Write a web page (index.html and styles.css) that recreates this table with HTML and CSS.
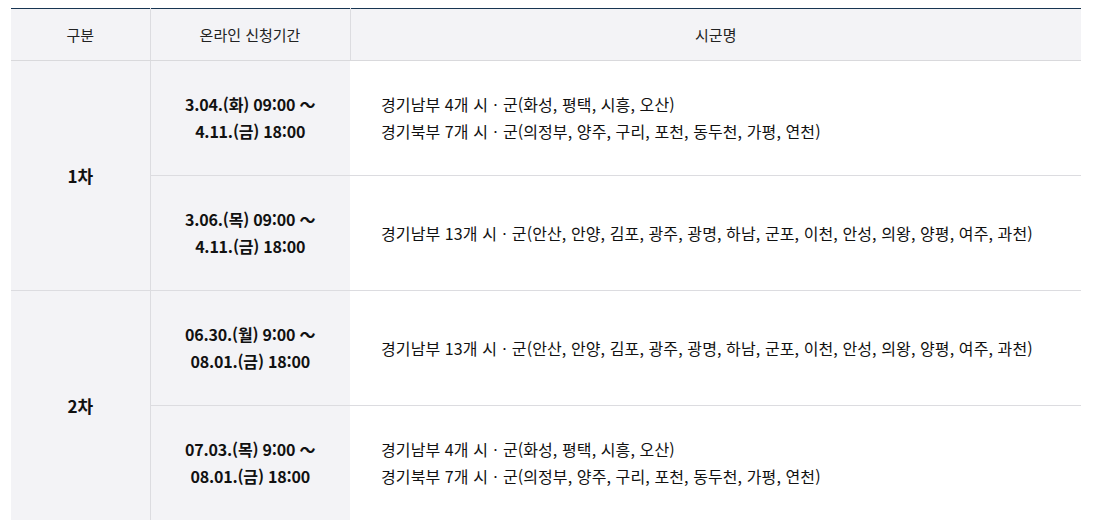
FILE: index.html
```html
<!DOCTYPE html>
<html lang="ko">
<head>
<meta charset="utf-8">
<link rel="stylesheet" href="styles.css">
</head>
<body>
<table class="tbl">
  <colgroup>
    <col class="c1"><col class="c2"><col class="c3">
  </colgroup>
  <thead>
    <tr>
      <th>구분</th>
      <th>온라인 신청기간</th>
      <th>시군명</th>
    </tr>
  </thead>
  <tbody>
    <tr>
      <td class="round" rowspan="2">1차</td>
      <td class="date">3.04.(화) 09:00 ～<br>4.11.(금) 18:00</td>
      <td class="area">경기남부 4개 시ㆍ군(화성, 평택, 시흥, 오산)<br>경기북부 7개 시ㆍ군(의정부, 양주, 구리, 포천, 동두천, 가평, 연천)</td>
    </tr>
    <tr>
      <td class="date">3.06.(목) 09:00 ～<br>4.11.(금) 18:00</td>
      <td class="area">경기남부 13개 시ㆍ군(안산, 안양, 김포, 광주, 광명, 하남, 군포, 이천, 안성, 의왕, 양평, 여주, 과천)</td>
    </tr>
    <tr>
      <td class="round" rowspan="2">2차</td>
      <td class="date">06.30.(월) 9:00 ～<br>08.01.(금) 18:00</td>
      <td class="area">경기남부 13개 시ㆍ군(안산, 안양, 김포, 광주, 광명, 하남, 군포, 이천, 안성, 의왕, 양평, 여주, 과천)</td>
    </tr>
    <tr>
      <td class="date">07.03.(목) 9:00 ～<br>08.01.(금) 18:00</td>
      <td class="area">경기남부 4개 시ㆍ군(화성, 평택, 시흥, 오산)<br>경기북부 7개 시ㆍ군(의정부, 양주, 구리, 포천, 동두천, 가평, 연천)</td>
    </tr>
  </tbody>
</table>
</body>
</html>
```

FILE: styles.css
```css
html, body {
  margin: 0;
  padding: 0;
  background: #ffffff;
}
body {
  padding: 8px 0 0 11px;
  font-family: "Noto Sans CJK KR", "Noto Sans", sans-serif;
  color: #111111;
}
.tbl {
  width: 1070px;
  border-collapse: collapse;
  table-layout: fixed;
  border-top: 1px solid #173552;
}
.c1 { width: 139px; }
.c2 { width: 200px; }
.c3 { width: 731px; }
.tbl th {
  height: 51px;
  padding: 0;
  background: #f3f3f6;
  font-weight: 400;
  font-size: 15px;
  color: #222222;
  text-align: center;
  border-bottom: 1px solid #d9d9dc;
  border-left: 1px solid #dcdce0;
}
.tbl th:first-child { border-left: none; }
.tbl td {
  padding: 0;
  height: 114px;
  border-bottom: 1px solid #dcdce0;
  font-size: 16px;
  line-height: 27px;
  letter-spacing: 0;
}
.tbl .round {
  background: #f3f3f6;
  font-weight: 700;
  font-size: 17px;
  text-align: center;
  border-right: 1px solid #dcdce0;
}
.tbl .date {
  background: #f3f3f6;
  font-weight: 700;
  text-align: center;
  letter-spacing: -0.2px;
}
.tbl .area {
  padding-left: 31px;
  text-align: left;
  color: #111111;
  letter-spacing: 0.1px;
}
```
